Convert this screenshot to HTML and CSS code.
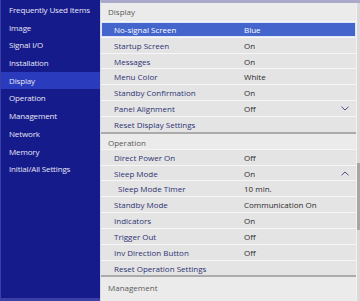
FILE: index.html
```html
<!DOCTYPE html>
<html>
<head>
<meta charset="utf-8">
<link rel="stylesheet" href="styles.css">
</head>
<body>
<div class="screen">
  <nav class="side">
    <div class="side-item">Frequently Used Items</div>
    <div class="side-item">Image</div>
    <div class="side-item">Signal I/O</div>
    <div class="side-item">Installation</div>
    <div class="side-item active">Display</div>
    <div class="side-item">Operation</div>
    <div class="side-item">Management</div>
    <div class="side-item">Network</div>
    <div class="side-item">Memory</div>
    <div class="side-item">Initial/All Settings</div>
  </nav>
  <main class="panel">
    <div class="list">
      <div class="sec-head first">Display</div>
      <div class="row sel"><span class="name">No-signal Screen</span><span class="val">Blue</span></div>
      <div class="row"><span class="name">Startup Screen</span><span class="val">On</span></div>
      <div class="row"><span class="name">Messages</span><span class="val">On</span></div>
      <div class="row"><span class="name">Menu Color</span><span class="val">White</span></div>
      <div class="row"><span class="name">Standby Confirmation</span><span class="val">On</span></div>
      <div class="row"><span class="name">Panel Alignment</span><span class="val">Off</span>
        <svg class="chev" viewBox="0 0 8 5" width="8" height="5"><path d="M0.5 0.8 L4 4 L7.5 0.8" fill="none" stroke="#4a4f86" stroke-width="1"/></svg></div>
      <div class="row"><span class="name">Reset Display Settings</span><span class="val"></span></div>
      <div class="sec-head">Operation</div>
      <div class="row"><span class="name">Direct Power On</span><span class="val">Off</span></div>
      <div class="row"><span class="name">Sleep Mode</span><span class="val">On</span>
        <svg class="chev" viewBox="0 0 8 5" width="8" height="5"><path d="M0.5 4.2 L4 1 L7.5 4.2" fill="none" stroke="#4a4f86" stroke-width="1"/></svg></div>
      <div class="row sub"><span class="name">Sleep Mode Timer</span><span class="val">10 min.</span></div>
      <div class="row"><span class="name">Standby Mode</span><span class="val">Communication On</span></div>
      <div class="row"><span class="name">Indicators</span><span class="val">On</span></div>
      <div class="row"><span class="name">Trigger Out</span><span class="val">Off</span></div>
      <div class="row"><span class="name">Inv Direction Button</span><span class="val">Off</span></div>
      <div class="row"><span class="name">Reset Operation Settings</span><span class="val"></span></div>
      <div class="sec-head last">Management</div>
    </div>
    <div class="scroll"><div class="thumb"></div></div>
  </main>
</div>
</body>
</html>
```

FILE: styles.css
```css
* { box-sizing: border-box; }
html, body { margin: 0; padding: 0; }
body {
  width: 360px;
  height: 301px;
  overflow: hidden;
  font-family: "Open Sans", "Noto Sans", sans-serif;
  background: #e6e6e6;
}
.screen {
  display: flex;
  width: 360px;
  height: 301px;
}
.side {
  width: 100px;
  flex: none;
  background: #161b8c;
  border-left: 1px solid #3a40a8;
  border-bottom: 3px solid #3a40a8;
  padding-top: 1px;
}
.side-item {
  height: 17.7px;
  line-height: 17.7px;
  padding-left: 8px;
  font-size: 8px;
  letter-spacing: -0.15px;
  color: #e6e6f4;
  white-space: nowrap;
}
.side-item.active {
  background: #2a3bbd;
}
.panel {
  flex: 1;
  display: flex;
  border-top: 3px solid #aaa9c9;
  border-left: 1px solid #d8d8e4;
  background: #e8e8e8;
}
.list {
  flex: 1;
  display: flex;
  flex-direction: column;
}
.sec-head {
  height: 17px;
  line-height: 17px;
  padding-left: 7px;
  font-size: 8px;
  color: #5a5a5a;
  background: #ebebeb;
  border-top: 2px solid #ababab;
  flex: none;
}
.sec-head.first {
  height: 18px;
  line-height: 18px;
  border-top: none;
}
.sec-head.last {
  flex: 1;
  padding-top: 2px;
}
.row {
  height: 15.83px;
  display: flex;
  align-items: center;
  padding-left: 13px;
  border-top: 1px solid #f6f6f6;
  background: #e4e4e4;
  font-size: 8px;
  flex: none;
}
.row .name {
  width: 130px;
  color: #2d3373;
  white-space: nowrap;
}
.row.sub .name {
  padding-left: 4px;
}
.row .val {
  flex: 1;
  color: #2b2b2b;
  white-space: nowrap;
}
.row .chev {
  margin-right: 7px;
  flex: none;
}
.row.sel {
  background: #4466cc;
  box-shadow: inset 0 0 0 1px #dfe5f8;
}
.row.sel .name, .row.sel .val {
  color: #ffffff;
}
.scroll {
  width: 4px;
  flex: none;
  background: #d9d9d9;
  border-left: 1px solid #f2f2f2;
  padding-top: 160px;
}
.thumb {
  height: 67px;
  background: #a6a6a6;
}
```
